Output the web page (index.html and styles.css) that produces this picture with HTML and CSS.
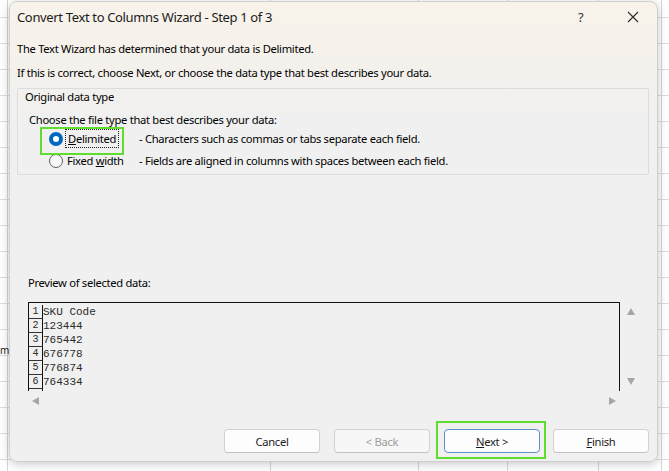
FILE: index.html
```html
<!DOCTYPE html>
<html lang="en">
<head>
  <meta charset="utf-8">
  <title>Convert Text to Columns Wizard</title>
  <link rel="stylesheet" href="styles.css">
</head>
<body>
  <div class="sheet">
    <span class="cell-text">m</span>

    <div class="dialog">
      <div class="titlebar">
        <span class="title">Convert Text to Columns Wizard - Step 1 of 3</span>
        <span class="help">?</span>
        <span class="close">
          <svg width="12" height="12" viewBox="0 0 12 12"><path d="M1 1 L11 11 M11 1 L1 11" stroke="#2b2b2b" stroke-width="1.1" fill="none"/></svg>
        </span>
      </div>

      <div class="content">
        <p class="intro">The Text Wizard has determined that your data is Delimited.</p>
        <p class="intro">If this is correct, choose Next, or choose the data type that best describes your data.</p>

        <div class="group">
          <div class="group-label">Original data type</div>
          <div class="group-hint">Choose the file type that best describes your data:</div>
          <div class="option">
            <span class="radio checked"></span>
            <span class="option-name"><span class="focus"><u>D</u>elimited</span></span>
            <span class="option-desc">- Characters such as commas or tabs separate each field.</span>
          </div>
          <div class="option">
            <span class="radio"></span>
            <span class="option-name">Fixed <u>w</u>idth</span>
            <span class="option-desc">- Fields are aligned in columns with spaces between each field.</span>
          </div>
          <div class="mark mark-delimited"></div>
        </div>

        <div class="preview-label">Preview of selected data:</div>
        <div class="preview">
          <div class="preview-body">
            <div class="prow"><span class="pnum">1</span><span class="pval">SKU Code</span></div>
            <div class="prow"><span class="pnum">2</span><span class="pval">123444</span></div>
            <div class="prow"><span class="pnum">3</span><span class="pval">765442</span></div>
            <div class="prow"><span class="pnum">4</span><span class="pval">676778</span></div>
            <div class="prow"><span class="pnum">5</span><span class="pval">776874</span></div>
            <div class="prow"><span class="pnum">6</span><span class="pval">764334</span></div>
            <div class="prow"><span class="pnum"></span><span class="pval"></span></div>
          </div>
          <div class="vscroll">
            <span class="arrow up"></span>
            <span class="arrow down"></span>
          </div>
          <div class="hscroll">
            <span class="arrow left"></span>
            <span class="arrow right"></span>
          </div>
          <div class="corner"></div>
        </div>

        <div class="buttons">
          <button type="button" class="btn">Cancel</button>
          <button type="button" class="btn" disabled>&lt; Back</button>
          <button type="button" class="btn default"><u>N</u>ext &gt;</button>
          <button type="button" class="btn"><u>F</u>inish</button>
          <div class="mark mark-next"></div>
        </div>
      </div>
    </div>
  </div>
</body>
</html>
```

FILE: styles.css
```css
body {
  margin: 0;
  font-family: "Noto Sans", "Segoe UI", sans-serif;
  color: #000;
}

/* worksheet behind the dialog */
.sheet {
  position: relative;
  width: 669px;
  height: 471px;
  overflow: hidden;
  background-color: #fff;
  background-image:
    linear-gradient(#d6d6d6, #d6d6d6),
    linear-gradient(#d6d6d6, #d6d6d6),
    linear-gradient(#d6d6d6, #d6d6d6),
    linear-gradient(#d6d6d6, #d6d6d6),
    linear-gradient(#d6d6d6, #d6d6d6),
    linear-gradient(#d6d6d6, #d6d6d6),
    repeating-linear-gradient(to bottom, transparent 0 25px, #dcdcdc 25px 26px);
  background-size: 1px 100%, 1px 100%, 1px 100%, 1px 100%, 1px 100%, 1px 100%, 100% 100%;
  background-position: 7px 0, 270px 0, 418px 0, 507px 0, 598px 0, 661px 0, 0 -8px;
  background-repeat: no-repeat, no-repeat, no-repeat, no-repeat, no-repeat, no-repeat, repeat;
}

.cell-text {
  position: absolute;
  left: 0;
  top: 343px;
  font-size: 10px;
  color: #222;
}

.dialog {
  position: absolute;
  left: 9px;
  top: 1px;
  width: 649px;
  height: 461px;
  box-sizing: border-box;
  border: 1px solid #cfcfcf;
  border-radius: 8px;
  background: linear-gradient(to bottom, #f8f3ea 0, #f5f1eb 50px, #f0f0f0 120px);
  box-shadow: 0 2px 10px rgba(0, 0, 0, 0.22);
}

.titlebar {
  display: flex;
  align-items: center;
  height: 30px;
  padding-left: 7px;
}

.title {
  flex: 1;
  font-size: 13px;
  letter-spacing: -0.35px;
  color: #1b1b1b;
}

.help {
  width: 49px;
  font-size: 13px;
  color: #333;
}

.close {
  display: flex;
  width: 30px;
}

.content {
  position: relative;
  padding: 0 8px 0 7px;
  font-size: 11.2px;
  letter-spacing: -0.3px;
}

.intro {
  margin: 9px 0 0;
  line-height: 16px;
}

.intro + .intro {
  margin-top: 8px;
}

.group {
  position: relative;
  margin-top: 7px;
  border: 1px solid #dcdcdc;
  border-radius: 2px;
  padding: 0 0 2px 7px;
  line-height: 16px;
}

.group-hint {
  margin: 7px 0 0 4px;
}

.option {
  display: flex;
  align-items: center;
  height: 22px;
}

.radio {
  box-sizing: border-box;
  width: 14px;
  height: 14px;
  margin-left: 24px;
  border: 1px solid #5f5f5f;
  border-radius: 50%;
  background: #f7f7f7;
}

.radio.checked {
  border: 4px solid #0067c0;
  background: #fff;
}

.option-name {
  width: 72px;
  margin-left: 4px;
}

.focus {
  outline: 1px dotted #222;
  outline-offset: 1px;
  padding: 0 1px;
}

.preview-label {
  margin: 100px 0 0 11px;
  line-height: 16px;
}

.preview {
  display: grid;
  grid-template-columns: 592px 21px;
  grid-template-rows: 89px 20px;
  margin: 11px 0 0 11px;
}

.preview-body {
  border: 1px solid #111;
  border-bottom: 0;
  padding-top: 2px;
  overflow: hidden;
  font-family: "Liberation Mono", monospace;
  font-size: 11px;
  letter-spacing: 0;
  color: #2a2a2a;
}

.prow {
  display: flex;
  height: 14px;
  line-height: 14px;
}

.pnum {
  box-sizing: border-box;
  width: 14px;
  border-bottom: 1px solid #333;
  border-right: 1px solid #111;
  text-align: center;
  font-size: 10px;
}

.vscroll {
  display: flex;
  flex-direction: column;
  justify-content: space-between;
  align-items: center;
  padding: 6px 0 6px 0;
}

.hscroll {
  display: flex;
  justify-content: space-between;
  align-items: center;
  padding: 0 4px 0 4px;
}

.arrow {
  width: 0;
  height: 0;
  border: 4px solid transparent;
}

.arrow.up {
  border-bottom: 7px solid #a6a6a6;
  border-top: 0;
}

.arrow.down {
  border-top: 7px solid #a6a6a6;
  border-bottom: 0;
}

.arrow.left {
  border-right: 7px solid #a6a6a6;
  border-left: 0;
}

.arrow.right {
  border-left: 7px solid #a6a6a6;
  border-right: 0;
}

.buttons {
  position: relative;
  display: flex;
  justify-content: flex-end;
  gap: 14px;
  margin-top: 18px;
}

.btn {
  box-sizing: border-box;
  width: 96px;
  height: 24px;
  border: 1px solid #d2d2d2;
  border-bottom-color: #c2c2c2;
  border-radius: 4px;
  background: #fdfdfd;
  font-family: "Noto Sans", "Segoe UI", sans-serif;
  font-size: 11.2px;
  letter-spacing: -0.3px;
  color: #1b1b1b;
}

.btn:last-of-type {
  margin-left: -1px;
}

.btn:disabled {
  background: #f7f7f7;
  color: #9d9d9d;
}

.btn.default {
  border: 1px solid #5f8fc9;
}

/* green callout frames */
.mark {
  position: absolute;
  border: 2px solid #5fdc2e;
}

.mark-delimited {
  left: 22px;
  top: 38px;
  width: 80px;
  height: 24px;
}

.mark-next {
  right: 103px;
  top: -8px;
  width: 106px;
  height: 34px;
}
```
